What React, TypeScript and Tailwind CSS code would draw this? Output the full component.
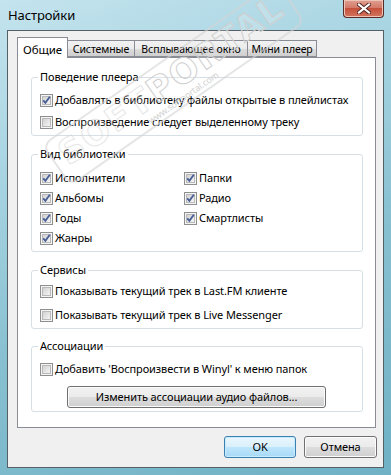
import React from "react";

function Check({ checked }: { checked: boolean }) {
  return (
    <svg width="13" height="13" viewBox="0 0 13 13" className="shrink-0">
      <defs>
        <linearGradient id="cbg" x1="0" y1="0" x2="1" y2="1">
          <stop offset="0" stopColor="#cfcfcf" />
          <stop offset="1" stopColor="#f7f7f7" />
        </linearGradient>
      </defs>
      <rect x="0.5" y="0.5" width="12" height="12" fill="#f4f4f4" stroke="#8e8f8f" />
      <rect x="2.5" y="2.5" width="8" height="8" fill="url(#cbg)" stroke="#b9b9b9" />
      {checked && (
        <path d="M3.2 6.4 L5.4 8.8 L9.8 2.8" fill="none" stroke="#4a5f97" strokeWidth="1.9" />
      )}
    </svg>
  );
}

function Row({ checked, label, className = "" }: { checked: boolean; label: string; className?: string }) {
  return (
    <div className={`flex items-center gap-[2px] ${className}`}>
      <Check checked={checked} />
      <span className="whitespace-nowrap">{label}</span>
    </div>
  );
}

function Group({ title, children, className = "" }: { title: string; children: React.ReactNode; className?: string }) {
  return (
    <fieldset className={`w-[332px] rounded-[3px] border border-[#d5dfe5] ${className}`}>
      <legend className="ml-[6px] px-[2px] leading-[16px] text-black">{title}</legend>
      {children}
    </fieldset>
  );
}

function Btn({ children, primary = false, className = "" }: { children: React.ReactNode; primary?: boolean; className?: string }) {
  return (
    <button
      className={`flex h-[22px] items-center justify-center rounded-[3px] border text-black ${
        primary
          ? "border-[#3c7fb1] bg-[linear-gradient(#eaf6fd_0%,#d9f0fc_50%,#bee6fd_50%,#a7d9f5_100%)] shadow-[inset_0_0_0_1px_#c6ecff]"
          : "border-[#707070] bg-[linear-gradient(#f2f2f2_0%,#ebebeb_50%,#dddddd_50%,#cfcfcf_100%)] shadow-[inset_0_0_0_1px_#fcfcfc]"
      } ${className}`}
    >
      {children}
    </button>
  );
}

const tabs = [
  { name: "Общие", w: "w-[51px]" },
  { name: "Системные", w: "w-[67px]" },
  { name: "Всплывающее окно", w: "w-[113px]" },
  { name: "Мини плеер", w: "w-[69px]" },
];

export default function App() {
  return (
    <div className="relative h-[475px] w-[391px] overflow-hidden bg-[linear-gradient(160deg,#c4e4ee_0%,#a6d3e1_30%,#86bfd0_60%,#70b1c5_100%)] font-['Noto_Sans',sans-serif] text-[11px] tracking-[-0.1px] text-black">
      {/* title bar */}
      <div className="flex h-[30px] items-center pl-[8px]">
        <span className="text-[13px] leading-none">Настройки</span>
      </div>
      <div className="absolute right-[7px] top-0 flex h-[18px] w-[41px] items-center justify-center rounded-b-[4px] border border-t-0 border-[#5a2b26] bg-[linear-gradient(#e0a091_0%,#d47a6a_45%,#c5503b_50%,#d3765f_100%)] shadow-[inset_0_0_0_1px_#eec3b8]">
        <svg width="14" height="11" viewBox="0 0 14 11">
          <path d="M2 1.5 L12 9.5 M12 1.5 L2 9.5" stroke="#4c2220" strokeWidth="4" strokeLinecap="square" />
          <path d="M2 1.5 L12 9.5 M12 1.5 L2 9.5" stroke="#ffffff" strokeWidth="2.2" strokeLinecap="square" />
        </svg>
      </div>

      {/* client area */}
      <div className="mx-[7px] flex h-[438px] flex-col border border-[#555f66] bg-[#f0f0f0] pl-[9px] pr-[6px] pt-[7px]">
        {/* tabs */}
        <div className="flex h-[19px] items-end">
          {tabs.map((t, i) =>
            i === 0 ? (
              <div
                key={t.name}
                className={`relative z-10 -mb-px flex h-[21px] ${t.w} shrink-0 items-start justify-center whitespace-nowrap border border-b-0 border-[#898c95] bg-white pt-[3px] text-[11.5px]`}
              >
                {t.name}
              </div>
            ) : (
              <div
                key={t.name}
                className={`flex h-[17px] ${t.w} shrink-0 items-center justify-center whitespace-nowrap border-y border-r border-[#898c95] bg-[linear-gradient(#f2f2f2_0%,#ebebeb_50%,#dddddd_50%,#cfcfcf_100%)] pt-px text-[10.5px] leading-none`}
              >
                {t.name}
              </div>
            )
          )}
        </div>
        <div className="flex h-[371px] w-[359px] flex-col border border-[#898c95] bg-white pl-[13px] pt-[11px]">
          <Group title="Поведение плеера">
            <div className="pb-[2px] pl-[8px] pt-[4px]">
              <Row checked label="Добавлять в библиотеку файлы открытые в плейлистах" className="h-[22px]" />
              <Row checked={false} label="Воспроизведение следует выделенному треку" className="h-[22px]" />
            </div>
          </Group>
          <Group title="Вид библиотеки" className="mt-[10px]">
            <div className="grid grid-cols-[144px_1fr] pb-[3px] pl-[8px] pt-[6px]">
              <Row checked label="Исполнители" className="h-[20px]" />
              <Row checked label="Папки" className="h-[20px]" />
              <Row checked label="Альбомы" className="h-[20px]" />
              <Row checked label="Радио" className="h-[20px]" />
              <Row checked label="Годы" className="h-[20px]" />
              <Row checked label="Смартлисты" className="h-[20px]" />
              <Row checked label="Жанры" className="h-[20px]" />
            </div>
          </Group>
          <Group title="Сервисы" className="mt-[10px]">
            <div className="pb-[1px] pl-[8px] pt-[1px]">
              <Row checked={false} label="Показывать текущий трек в Last.FM клиенте" className="h-[24px]" />
              <Row checked={false} label="Показывать текущий трек в Live Messenger" className="h-[24px]" />
            </div>
          </Group>
          <Group title="Ассоциации" className="mt-[9px]">
            <div className="pb-[3px] pl-[8px] pt-[5px]">
              <Row checked={false} label="Добавить 'Воспроизвести в Winyl' к меню папок" className="h-[20px]" />
              <div className="mt-[7px] flex pl-[27px]">
                <Btn className="h-[21px] w-[259px]">Изменить ассоциации аудио файлов...</Btn>
              </div>
            </div>
          </Group>
        </div>
        <div className="mt-[8px] flex justify-end gap-[8px]">
          <Btn primary className="w-[72px]">OK</Btn>
          <Btn className="w-[73px]">Отмена</Btn>
        </div>
      </div>

      {/* watermark stamp */}
      <div className="pointer-events-none absolute left-[30px] top-[58px] flex rotate-[-35deg] flex-col items-center rounded-[10px] border-2 border-[#d4d4d4]/60 px-[8px] py-[2px]">
        <span className="font-['DejaVu_Sans',sans-serif] text-[34px] font-bold leading-none tracking-[2px] text-white/20 [-webkit-text-stroke:1px_#cfcfcf]">
          <span className="opacity-50">SOFT</span>PORTAL
        </span>
        <span className="text-[9px] leading-none text-[#d0d0d0]">www.softportal.com</span>
      </div>
    </div>
  );
}
